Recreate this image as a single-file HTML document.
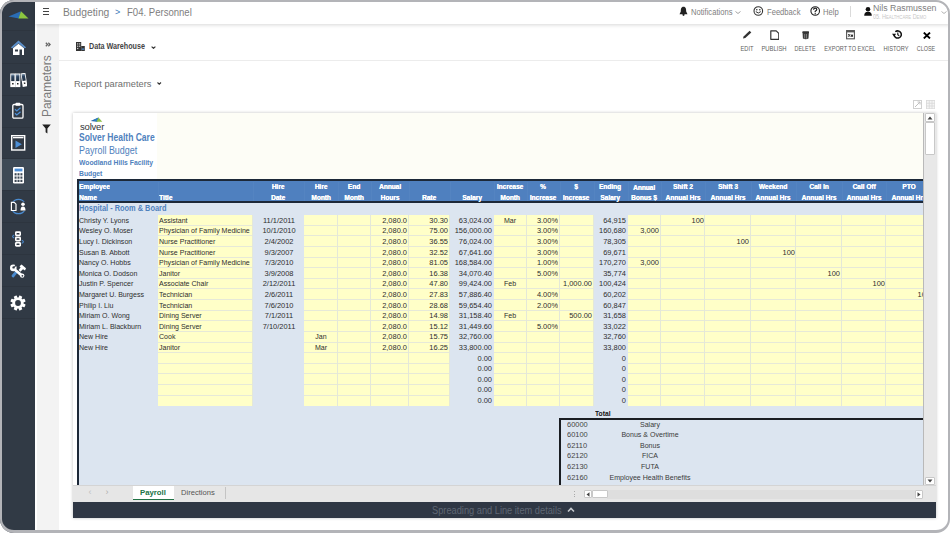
<!DOCTYPE html><html><head><meta charset="utf-8"><style>
*{margin:0;padding:0;box-sizing:border-box}
html,body{width:950px;height:533px;overflow:hidden;background:#fff;font-family:"Liberation Sans",sans-serif}
.ab{position:absolute}
.t{position:absolute;white-space:nowrap;line-height:1}
</style></head><body>
<div class="ab" style="left:0;top:0;width:950px;height:533px;border-radius:14px;overflow:hidden;background:#fff">
<div class="ab" style="left:0;top:0;width:950px;height:533px">
<div class="ab" style="left:0;top:0;width:35px;height:533px;background:#313a45"></div>
<div class="ab" style="left:0;top:159px;width:35px;height:31px;background:#3e4a56"></div>
<div class="ab" style="left:0;top:30px;width:35px;height:1px;background:#2d353f"></div>
<div class="ab" style="left:0;top:63px;width:35px;height:1px;background:#2d353f"></div>
<div class="ab" style="left:0;top:95px;width:35px;height:1px;background:#2d353f"></div>
<div class="ab" style="left:0;top:127px;width:35px;height:1px;background:#2d353f"></div>
<div class="ab" style="left:0;top:158px;width:35px;height:1px;background:#2d353f"></div>
<div class="ab" style="left:0;top:190px;width:35px;height:1px;background:#2d353f"></div>
<div class="ab" style="left:0;top:222px;width:35px;height:1px;background:#2d353f"></div>
<div class="ab" style="left:0;top:254px;width:35px;height:1px;background:#2d353f"></div>
<div class="ab" style="left:0;top:286px;width:35px;height:1px;background:#2d353f"></div>
<div class="ab" style="left:0;top:318px;width:35px;height:1px;background:#2d353f"></div>
<div class="ab" style="left:35px;top:0;width:2px;height:533px;background:#ffffff"></div>
<div class="ab" style="left:37px;top:0;width:22px;height:533px;background:#f3f3f3"></div>
<div class="ab" style="left:35px;top:0;width:915px;height:24px;background:#fff;box-shadow:0 1px 4px rgba(0,0,0,0.16)"></div>
<svg class="ab" style="left:8px;top:10px" width="22" height="10" viewBox="0 0 22 10" ><polygon points="0.5,6.5 13,1.3 11,8.5" fill="#2a6db5"/><polygon points="13,1.3 20.5,8.5 10.5,8.5" fill="#8cc63f"/></svg>
<svg class="ab" style="left:9.8px;top:40px" width="17" height="16" viewBox="0 0 17 16" ><polygon points="8.5,0.5 0.8,7.5 2.5,8.3 8.5,3.2 14.5,8.3 16.2,7.5" fill="#5b8fc9"/><path d="M3 8.2 L8.5 3.8 L14 8.2 V15 H3 Z" fill="#fff"/><rect x="5" y="9.5" width="3" height="2" fill="#313a45"/><rect x="9.5" y="9.5" width="2.5" height="5.5" fill="#313a45"/></svg>
<svg class="ab" style="left:10.3px;top:72.6px" width="17" height="15" viewBox="0 0 17 15" ><defs><linearGradient id="bk" x1="0" y1="0" x2="0" y2="1"><stop offset="0" stop-color="#8da3b8"/><stop offset="0.35" stop-color="#2c4460"/><stop offset="1" stop-color="#1e2e40"/></linearGradient></defs><rect x="0.3" y="0.5" width="10" height="13.6" fill="#fff"/><rect x="1.2" y="1.3" width="3.3" height="6.8" fill="url(#bk)"/><rect x="6.1" y="1.3" width="3.3" height="6.8" fill="url(#bk)"/><rect x="5" y="0.5" width="0.7" height="13.6" fill="#c9ced4"/><rect x="2.1" y="10" width="1.5" height="1.5" fill="#222"/><rect x="7" y="10" width="1.5" height="1.5" fill="#222"/><g transform="rotate(-9 10.6 0.5)"><rect x="10.6" y="0.5" width="4.8" height="13.6" fill="#fff"/><rect x="11.4" y="1.3" width="3.2" height="6.8" fill="url(#bk)"/><rect x="12.3" y="10" width="1.5" height="1.5" fill="#222"/></g></svg>
<svg class="ab" style="left:12px;top:102px" width="12" height="17" viewBox="0 0 12 17" ><rect x="0.8" y="2.5" width="10.2" height="13.6" rx="1.2" fill="none" stroke="#fff" stroke-width="1.3"/><rect x="3.5" y="0.8" width="4.8" height="3" rx="0.8" fill="#fff"/><polyline points="3,7.3 4.8,8.9 8.5,5.8" fill="none" stroke="#4d8fd6" stroke-width="1.3"/><polyline points="3,11.3 4.8,12.9 8.5,9.8" fill="none" stroke="#4d8fd6" stroke-width="1.3"/></svg>
<svg class="ab" style="left:11px;top:135px" width="15" height="16" viewBox="0 0 15 16" ><rect x="0.7" y="0.7" width="13" height="14.3" fill="none" stroke="#fff" stroke-width="1.4"/><rect x="2" y="2" width="10.5" height="1.3" fill="#fff"/><polygon points="4.5,5.5 10.8,9.2 4.5,13" fill="#4d8fd6"/></svg>
<svg class="ab" style="left:13px;top:167px" width="11" height="16.5" viewBox="0 0 11 16.5" ><rect x="0" y="0" width="11" height="16.5" rx="1.2" fill="#fff"/><rect x="1.6" y="1.6" width="7.8" height="2.8" fill="#4d8fd6"/><rect x="1.6" y="6.2" width="2" height="2.2" fill="#3e4a56"/><rect x="4.5" y="6.2" width="2" height="2.2" fill="#3e4a56"/><rect x="7.4" y="6.2" width="2" height="2.2" fill="#3e4a56"/><rect x="1.6" y="9.5" width="2" height="2.2" fill="#3e4a56"/><rect x="4.5" y="9.5" width="2" height="2.2" fill="#3e4a56"/><rect x="7.4" y="9.5" width="2" height="2.2" fill="#3e4a56"/><rect x="1.6" y="12.8" width="2" height="2.2" fill="#3e4a56"/><rect x="4.5" y="12.8" width="2" height="2.2" fill="#3e4a56"/><rect x="7.4" y="12.8" width="2" height="2.2" fill="#3e4a56"/></svg>
<svg class="ab" style="left:9px;top:198px" width="19" height="17" viewBox="0 0 19 17" ><path d="M3.26 4.9 A7.2 7.2 0 0 1 15.74 4.9" fill="none" stroke="#4a8bd0" stroke-width="1.2"/><path d="M15.74 12.1 A7.2 7.2 0 0 1 3.26 12.1" fill="none" stroke="#4a8bd0" stroke-width="1.2"/><rect x="1.6" y="3.8" width="6.2" height="9.3" fill="#313a45"/><rect x="10.8" y="3.8" width="6.6" height="9.3" fill="#313a45"/><path d="M2.4 4.4 H5.2 L7 6.2 V12.5 H2.4 Z" fill="none" stroke="#fff" stroke-width="1.2"/><circle cx="14" cy="6.3" r="1.8" fill="#fff"/><path d="M11.5 12.5 Q11.5 8.6 14 8.6 Q16.5 8.6 16.5 12.5 Z" fill="#fff"/></svg>
<svg class="ab" style="left:10px;top:231px" width="16" height="16" viewBox="0 0 16 16" ><rect x="5" y="0.3" width="6" height="4.8" rx="1.4" fill="#fff"/><rect x="6.5" y="1.9" width="3" height="1.6" rx="0.6" fill="#313a45"/><rect x="5" y="5.6" width="6" height="4.8" rx="1.4" fill="#fff"/><rect x="6.5" y="7.199999999999999" width="3" height="1.6" rx="0.6" fill="#313a45"/><rect x="5" y="10.9" width="6" height="4.8" rx="1.4" fill="#fff"/><rect x="6.5" y="12.5" width="3" height="1.6" rx="0.6" fill="#313a45"/><path d="M4.2 4 Q1 5.5 4.2 7" fill="none" stroke="#4a8bd0" stroke-width="1.1"/><path d="M11.8 9.2 Q15 10.7 11.8 12.2" fill="none" stroke="#4a8bd0" stroke-width="1.1"/></svg>
<svg class="ab" style="left:9px;top:263px" width="18" height="16" viewBox="0 0 18 16" ><path d="M7.2 9.2 L4 13" stroke="#4a8bd0" stroke-width="2.8" stroke-linecap="round"/><path d="M10.5 3.2 L12.6 1.6 L17 5.2 L16 7.4 L14 6.2 L11.4 8.8 L9.6 7 L11.6 4.6 Z" fill="#fff"/><path d="M5 6 L13 12.6" stroke="#fff" stroke-width="2.7" stroke-linecap="round"/><circle cx="4.3" cy="4.9" r="3.3" fill="#fff"/><path d="M4.6 4.4 L7.2 0.4 L9 2.6 Z" fill="#313a45"/><circle cx="4.6" cy="4.4" r="1.2" fill="#313a45"/><circle cx="13.2" cy="12.6" r="2.2" fill="#fff"/><circle cx="13.4" cy="12.8" r="0.9" fill="#313a45"/></svg>
<svg class="ab" style="left:10px;top:295px" width="16" height="16" viewBox="0 0 16 16" ><g transform="translate(8 8)"><rect x="-1.6" y="-7.6" width="3.2" height="3.6" rx="0.5" fill="#fff" transform="rotate(22.5)"/><rect x="-1.6" y="-7.6" width="3.2" height="3.6" rx="0.5" fill="#fff" transform="rotate(67.5)"/><rect x="-1.6" y="-7.6" width="3.2" height="3.6" rx="0.5" fill="#fff" transform="rotate(112.5)"/><rect x="-1.6" y="-7.6" width="3.2" height="3.6" rx="0.5" fill="#fff" transform="rotate(157.5)"/><rect x="-1.6" y="-7.6" width="3.2" height="3.6" rx="0.5" fill="#fff" transform="rotate(202.5)"/><rect x="-1.6" y="-7.6" width="3.2" height="3.6" rx="0.5" fill="#fff" transform="rotate(247.5)"/><rect x="-1.6" y="-7.6" width="3.2" height="3.6" rx="0.5" fill="#fff" transform="rotate(292.5)"/><rect x="-1.6" y="-7.6" width="3.2" height="3.6" rx="0.5" fill="#fff" transform="rotate(337.5)"/><circle r="5.6" fill="#fff"/><circle r="2.9" fill="#313a45"/></g></svg>
<div class="ab" style="left:43px;top:8.3px;width:6px;height:1.1px;background:#444"></div>
<div class="ab" style="left:43px;top:10.9px;width:6px;height:1.1px;background:#444"></div>
<div class="ab" style="left:43px;top:13.5px;width:6px;height:1.1px;background:#444"></div>
<div class="t" style="left:62.80px;top:7px;font-size:10.5px;color:#7e7e7e;transform:scaleX(0.98);transform-origin:0 0;">Budgeting</div>
<div class="t" style="left:115.40px;top:7px;font-size:9.5px;color:#3a78b8;transform:scaleX(0.95);transform-origin:0 0;">&gt;</div>
<div class="t" style="left:126.80px;top:7px;font-size:10.5px;color:#7e7e7e;transform:scaleX(0.91);transform-origin:0 0;">F04. Personnel</div>
<svg class="ab" style="left:679px;top:6px" width="9" height="10" viewBox="0 0 9 10" ><path d="M4.5 0.8 C7 0.8 7.2 3.5 7.2 5.5 L8.5 8.2 H0.5 L1.8 5.5 C1.8 3.5 2 0.8 4.5 0.8 Z" fill="#222"/><circle cx="4.5" cy="8.8" r="1.1" fill="#222"/></svg>
<div class="t" style="left:691.00px;top:9px;font-size:8.2px;color:#7e7e7e;transform:scaleX(0.93);transform-origin:0 0;">Notifications</div>
<svg class="ab" style="left:735px;top:11px" width="6" height="3" viewBox="0 0 6 3" ><polyline points="0.5,0.5 3,2.5 5.5,0.5" fill="none" stroke="#999" stroke-width="0.9"/></svg>
<svg class="ab" style="left:753px;top:6px" width="11" height="10" viewBox="0 0 11 10" ><circle cx="5.3" cy="5" r="4.3" fill="none" stroke="#333" stroke-width="1.1"/><circle cx="3.8" cy="3.8" r="0.8" fill="#333"/><circle cx="6.8" cy="3.8" r="0.8" fill="#333"/><path d="M2.8 5.6 Q5.3 8.4 7.8 5.6" fill="none" stroke="#333" stroke-width="1"/></svg>
<div class="t" style="left:766.50px;top:9px;font-size:8.2px;color:#7e7e7e;transform:scaleX(0.93);transform-origin:0 0;">Feedback</div>
<svg class="ab" style="left:810px;top:6px" width="11" height="10" viewBox="0 0 11 10" ><circle cx="5.2" cy="5" r="4.3" fill="none" stroke="#222" stroke-width="1.1"/><path d="M3.6 3.8 Q3.6 2.2 5.2 2.2 Q6.8 2.2 6.8 3.6 Q6.8 4.6 5.2 5.3 V6.3" fill="none" stroke="#222" stroke-width="1.2"/><circle cx="5.2" cy="7.8" r="0.7" fill="#222"/></svg>
<div class="t" style="left:823.00px;top:9px;font-size:8.2px;color:#7e7e7e;transform:scaleX(0.93);transform-origin:0 0;">Help</div>
<div class="ab" style="left:850px;top:6.3px;width:0.8px;height:11px;background:#dadada"></div>
<svg class="ab" style="left:864px;top:7px" width="8" height="9" viewBox="0 0 8 9" ><circle cx="4" cy="2.3" r="2.3" fill="#111"/><path d="M0.2 8.8 Q0.2 4.8 4 4.8 Q7.8 4.8 7.8 8.8 Z" fill="#111"/></svg>
<div class="t" style="left:873.00px;top:4px;font-size:9.2px;color:#7e7e7e;transform:scaleX(0.955);transform-origin:0 0;">Nils Rasmussen</div>
<div class="t" style="left:873px;top:14px;font-size:6.8px;color:#c8c8c8;transform:scaleX(0.8);transform-origin:0 0">05. H<span style="font-size:5.3px">EALTHCARE</span> D<span style="font-size:5.3px">EMO</span></div>
<svg class="ab" style="left:940.5px;top:11px" width="6" height="3" viewBox="0 0 6 3" ><polyline points="0.5,0.5 3,2.5 5.5,0.5" fill="none" stroke="#aaa" stroke-width="0.9"/></svg>
<svg class="ab" style="left:45px;top:41.5px" width="6" height="5" viewBox="0 0 6 5" ><polyline points="0.8,0.8 2.6,2.5 0.8,4.2" fill="none" stroke="#666" stroke-width="1.3"/><polyline points="3.3,0.8 5.1,2.5 3.3,4.2" fill="none" stroke="#666" stroke-width="1.3"/></svg>
<div class="t" style="left:40.5px;top:116.6px;font-size:12.5px;color:#7a7a7a;transform:rotate(-90deg) scaleX(0.955);transform-origin:0 0">Parameters</div>
<svg class="ab" style="left:42px;top:124px" width="9" height="10" viewBox="0 0 9 10" ><polygon points="0.2,0.5 8.8,0.5 5.4,4.5 5.4,9.5 3.6,8.3 3.6,4.5" fill="#222"/></svg>
<svg class="ab" style="left:76px;top:42px" width="9" height="9" viewBox="0 0 9 9" ><rect x="0" y="0" width="5.2" height="9" fill="#333"/><rect x="5.2" y="4" width="3.6" height="5" fill="#333"/><rect x="1" y="1.3" width="1.3" height="1.2" fill="#ccc"/><rect x="3" y="1.3" width="1.3" height="1.2" fill="#ccc"/><rect x="1" y="3.6" width="1.3" height="1.2" fill="#ccc"/><rect x="3" y="3.6" width="1.3" height="1.2" fill="#ccc"/><rect x="1" y="5.9" width="1.3" height="1.2" fill="#ccc"/><rect x="5.8" y="6.5" width="2.4" height="1.2" fill="#4d8fd6"/></svg>
<div class="t" style="left:88.90px;top:42px;font-size:8.4px;color:#444;font-weight:bold;transform:scaleX(0.857);transform-origin:0 0;">Data Warehouse</div>
<svg class="ab" style="left:150.5px;top:45.5px" width="5" height="3" viewBox="0 0 5 3" ><polyline points="0.6,0.6 2.5,2.3 4.4,0.6" fill="none" stroke="#333" stroke-width="1.2"/></svg>
<div class="ab" style="left:59px;top:60.2px;width:889px;height:1px;background:#ececec"></div>
<div class="t" style="left:647.30px;width:200px;text-align:center;top:46px;font-size:6.4px;color:#606060;transform:scaleX(0.89);transform-origin:50% 0;">EDIT</div>
<div class="t" style="left:674.30px;width:200px;text-align:center;top:46px;font-size:6.4px;color:#606060;transform:scaleX(0.92);transform-origin:50% 0;">PUBLISH</div>
<div class="t" style="left:705.00px;width:200px;text-align:center;top:46px;font-size:6.4px;color:#606060;transform:scaleX(0.843);transform-origin:50% 0;">DELETE</div>
<div class="t" style="left:749.65px;width:200px;text-align:center;top:46px;font-size:6.4px;color:#606060;transform:scaleX(0.867);transform-origin:50% 0;">EXPORT TO EXCEL</div>
<div class="t" style="left:796.30px;width:200px;text-align:center;top:46px;font-size:6.4px;color:#606060;transform:scaleX(0.887);transform-origin:50% 0;">HISTORY</div>
<div class="t" style="left:825.90px;width:200px;text-align:center;top:46px;font-size:6.4px;color:#606060;transform:scaleX(0.848);transform-origin:50% 0;">CLOSE</div>
<svg class="ab" style="left:742px;top:30px" width="10" height="9" viewBox="0 0 10 9" ><path d="M1 8.5 L1.6 6.5 L7.6 0.8 L9.3 2.5 L3.3 8 Z" fill="#333"/></svg>
<svg class="ab" style="left:769.5px;top:29.8px" width="9.5" height="10" viewBox="0 0 9.5 10" ><path d="M0.8 0.8 H6.2 L8.8 3.4 V9.3 H0.8 Z" fill="none" stroke="#333" stroke-width="1.2" stroke-linejoin="round"/></svg>
<svg class="ab" style="left:801.8px;top:31px" width="7.5" height="9" viewBox="0 0 7.5 9" ><rect x="0.2" y="0.3" width="7" height="2" rx="1" fill="#333"/><path d="M0.6 2 H6.8 L6.5 7.6 Q3.7 9 0.9 7.6 Z" fill="#3a3a3a"/><rect x="2.4" y="3" width="0.7" height="4.6" fill="#9a9a9a"/><rect x="4.2" y="3" width="0.7" height="4.6" fill="#9a9a9a"/></svg>
<svg class="ab" style="left:845.5px;top:30px" width="9" height="9.5" viewBox="0 0 9 9.5" ><rect x="0.6" y="0.6" width="7.8" height="8.2" fill="none" stroke="#555" stroke-width="1.1"/><rect x="0.6" y="0.6" width="7.8" height="1.8" fill="#555"/><path d="M2.2 4 L4.2 6.8 M4.2 4 L2.2 6.8" stroke="#333" stroke-width="0.9"/><rect x="4.8" y="4.6" width="2.2" height="2.2" fill="#333"/></svg>
<svg class="ab" style="left:891.8px;top:29.9px" width="10" height="9" viewBox="0 0 10 9" ><path d="M2.1 4.5 A3.6 3.6 0 1 0 3.3 1.8" fill="none" stroke="#111" stroke-width="1.5"/><polygon points="0,3.8 4.2,3.8 2.1,6.4" fill="#111"/><path d="M5.8 2.6 V4.8 L7.2 5.8" fill="none" stroke="#111" stroke-width="1.1"/></svg>
<svg class="ab" style="left:922.5px;top:31.8px" width="8" height="7" viewBox="0 0 8 7" ><path d="M0.8 0.6 L7 6.4 M7 0.6 L0.8 6.4" stroke="#000" stroke-width="1.9"/></svg>
<div class="t" style="left:74.00px;top:79px;font-size:9.4px;color:#6e6e6e;transform:scaleX(0.99);transform-origin:0 0;">Report parameters</div>
<svg class="ab" style="left:157px;top:82.3px" width="4.5" height="2.8" viewBox="0 0 4.5 2.8" ><polyline points="0.5,0.5 2.25,2.2 4,0.5" fill="none" stroke="#333" stroke-width="1.1"/></svg>
<svg class="ab" style="left:913px;top:100px" width="9" height="9" viewBox="0 0 9 9" ><rect x="0.5" y="0.5" width="8" height="8" fill="none" stroke="#d0d0d0" stroke-width="1"/><path d="M2 7 L7 2 M4.5 2 H7 V4.5" fill="none" stroke="#c0c0c0" stroke-width="1"/></svg>
<svg class="ab" style="left:926px;top:100px" width="9" height="9" viewBox="0 0 9 9" ><rect x="0" y="0" width="9" height="9" fill="#d8d8d8"/><rect x="0.8" y="0.8" width="2" height="2" fill="#f4f4f4"/><rect x="3.5999999999999996" y="0.8" width="2" height="2" fill="#f4f4f4"/><rect x="6.3999999999999995" y="0.8" width="2" height="2" fill="#f4f4f4"/><rect x="0.8" y="3.5999999999999996" width="2" height="2" fill="#f4f4f4"/><rect x="3.5999999999999996" y="3.5999999999999996" width="2" height="2" fill="#f4f4f4"/><rect x="6.3999999999999995" y="3.5999999999999996" width="2" height="2" fill="#f4f4f4"/><rect x="0.8" y="6.3999999999999995" width="2" height="2" fill="#f4f4f4"/><rect x="3.5999999999999996" y="6.3999999999999995" width="2" height="2" fill="#f4f4f4"/><rect x="6.3999999999999995" y="6.3999999999999995" width="2" height="2" fill="#f4f4f4"/></svg>
<div class="ab" style="left:73px;top:113px;width:863px;height:405px;background:#fff;box-shadow:0 0 3px rgba(0,0,0,0.25)"></div>
<div class="ab" style="left:157px;top:113px;width:766px;height:66px;background:#fdfdf6"></div>
<div class="ab" style="left:0;top:0;width:923px;height:485px;overflow:hidden">
<svg class="ab" style="left:90px;top:117px" width="13" height="6" viewBox="0 0 13 6" ><polygon points="0.6,4.1 8.5,0.4 7.3,4.8" fill="#1f5f9e"/><polygon points="3,3.2 8.5,0.4 7.3,4.8" fill="#2f7fc4"/><polygon points="8.5,0.4 12.3,4.8 6.4,4.8" fill="#8cc04a"/></svg>
<div class="t" style="left:80px;top:122px;font-size:9.5px;color:#333;transform:scaleX(1.0);transform-origin:0 0;letter-spacing:-0.2px">solver</div>
<div class="t" style="left:79.00px;top:133px;font-size:10.2px;color:#4f81bd;font-weight:bold;transform:scaleX(0.835);transform-origin:0 0;">Solver Health Care</div>
<div class="t" style="left:79.00px;top:146px;font-size:10.2px;color:#4f81bd;transform:scaleX(0.88);transform-origin:0 0;">Payroll Budget</div>
<div class="t" style="left:79.00px;top:159px;font-size:7.8px;color:#4f81bd;font-weight:bold;transform:scaleX(0.87);transform-origin:0 0;">Woodland Hills Facility</div>
<div class="t" style="left:79.00px;top:170px;font-size:7.8px;color:#4f81bd;font-weight:bold;transform:scaleX(0.87);transform-origin:0 0;">Budget</div>
<div class="ab" style="left:77px;top:202px;width:846px;height:283px;background:#dce5f0"></div>
<div class="ab" style="left:77px;top:179px;width:846px;height:24px;background:#4f80bf;border-top:2px solid #1c2838;border-bottom:2px solid #1c2838"></div>
<div class="ab" style="left:158.0px;top:181.5px;width:1px;height:19.5px;background:#5484c1"></div>
<div class="ab" style="left:253.0px;top:181.5px;width:1px;height:19.5px;background:#5484c1"></div>
<div class="ab" style="left:304.0px;top:181.5px;width:1px;height:19.5px;background:#5484c1"></div>
<div class="ab" style="left:337.5px;top:181.5px;width:1px;height:19.5px;background:#5484c1"></div>
<div class="ab" style="left:370.5px;top:181.5px;width:1px;height:19.5px;background:#5484c1"></div>
<div class="ab" style="left:408.5px;top:181.5px;width:1px;height:19.5px;background:#5484c1"></div>
<div class="ab" style="left:449.5px;top:181.5px;width:1px;height:19.5px;background:#5484c1"></div>
<div class="ab" style="left:493.5px;top:181.5px;width:1px;height:19.5px;background:#5484c1"></div>
<div class="ab" style="left:526.5px;top:181.5px;width:1px;height:19.5px;background:#5484c1"></div>
<div class="ab" style="left:559.5px;top:181.5px;width:1px;height:19.5px;background:#5484c1"></div>
<div class="ab" style="left:593.5px;top:181.5px;width:1px;height:19.5px;background:#5484c1"></div>
<div class="ab" style="left:627.5px;top:181.5px;width:1px;height:19.5px;background:#5484c1"></div>
<div class="ab" style="left:660.5px;top:181.5px;width:1px;height:19.5px;background:#5484c1"></div>
<div class="ab" style="left:705.0px;top:181.5px;width:1px;height:19.5px;background:#5484c1"></div>
<div class="ab" style="left:750.5px;top:181.5px;width:1px;height:19.5px;background:#5484c1"></div>
<div class="ab" style="left:796.0px;top:181.5px;width:1px;height:19.5px;background:#5484c1"></div>
<div class="ab" style="left:841.5px;top:181.5px;width:1px;height:19.5px;background:#5484c1"></div>
<div class="ab" style="left:886.0px;top:181.5px;width:1px;height:19.5px;background:#5484c1"></div>
<div class="ab" style="left:77px;top:179.5px;width:1.5px;height:306px;background:#1c2838"></div>
<div class="ab" style="left:158.0px;top:214.7px;width:95.0px;height:191.0px;background:#ffffc8"></div>
<div class="ab" style="left:304.0px;top:214.7px;width:33.5px;height:191.0px;background:#ffffc8"></div>
<div class="ab" style="left:337.5px;top:214.7px;width:33.0px;height:191.0px;background:#ffffc8"></div>
<div class="ab" style="left:370.5px;top:214.7px;width:38.0px;height:191.0px;background:#ffffc8"></div>
<div class="ab" style="left:408.5px;top:214.7px;width:41.0px;height:191.0px;background:#ffffc8"></div>
<div class="ab" style="left:493.5px;top:214.7px;width:33.0px;height:191.0px;background:#ffffc8"></div>
<div class="ab" style="left:526.5px;top:214.7px;width:33.0px;height:191.0px;background:#ffffc8"></div>
<div class="ab" style="left:559.5px;top:214.7px;width:34.0px;height:191.0px;background:#ffffc8"></div>
<div class="ab" style="left:627.5px;top:214.7px;width:33.0px;height:191.0px;background:#ffffc8"></div>
<div class="ab" style="left:660.5px;top:214.7px;width:44.5px;height:191.0px;background:#ffffc8"></div>
<div class="ab" style="left:705.0px;top:214.7px;width:45.5px;height:191.0px;background:#ffffc8"></div>
<div class="ab" style="left:750.5px;top:214.7px;width:45.5px;height:191.0px;background:#ffffc8"></div>
<div class="ab" style="left:796.0px;top:214.7px;width:45.5px;height:191.0px;background:#ffffc8"></div>
<div class="ab" style="left:841.5px;top:214.7px;width:44.5px;height:191.0px;background:#ffffc8"></div>
<div class="ab" style="left:886.0px;top:214.7px;width:45.5px;height:191.0px;background:#ffffc8"></div>
<div class="ab" style="left:158.0px;top:224.81px;width:95.0px;height:1px;background:#e6e9d8"></div>
<div class="ab" style="left:158.0px;top:235.42px;width:95.0px;height:1px;background:#e6e9d8"></div>
<div class="ab" style="left:158.0px;top:246.03px;width:95.0px;height:1px;background:#e6e9d8"></div>
<div class="ab" style="left:158.0px;top:256.64px;width:95.0px;height:1px;background:#e6e9d8"></div>
<div class="ab" style="left:158.0px;top:267.25px;width:95.0px;height:1px;background:#e6e9d8"></div>
<div class="ab" style="left:158.0px;top:277.86px;width:95.0px;height:1px;background:#e6e9d8"></div>
<div class="ab" style="left:158.0px;top:288.47px;width:95.0px;height:1px;background:#e6e9d8"></div>
<div class="ab" style="left:158.0px;top:299.08px;width:95.0px;height:1px;background:#e6e9d8"></div>
<div class="ab" style="left:158.0px;top:309.69px;width:95.0px;height:1px;background:#e6e9d8"></div>
<div class="ab" style="left:158.0px;top:320.30px;width:95.0px;height:1px;background:#e6e9d8"></div>
<div class="ab" style="left:158.0px;top:330.91px;width:95.0px;height:1px;background:#e6e9d8"></div>
<div class="ab" style="left:158.0px;top:341.52px;width:95.0px;height:1px;background:#e6e9d8"></div>
<div class="ab" style="left:158.0px;top:352.13px;width:95.0px;height:1px;background:#e6e9d8"></div>
<div class="ab" style="left:158.0px;top:362.74px;width:95.0px;height:1px;background:#e6e9d8"></div>
<div class="ab" style="left:158.0px;top:373.35px;width:95.0px;height:1px;background:#e6e9d8"></div>
<div class="ab" style="left:158.0px;top:383.96px;width:95.0px;height:1px;background:#e6e9d8"></div>
<div class="ab" style="left:158.0px;top:394.57px;width:95.0px;height:1px;background:#e6e9d8"></div>
<div class="ab" style="left:252.4px;top:214.7px;width:1px;height:191.0px;background:#e4e8d8"></div>
<div class="ab" style="left:304.0px;top:224.81px;width:33.5px;height:1px;background:#e6e9d8"></div>
<div class="ab" style="left:304.0px;top:235.42px;width:33.5px;height:1px;background:#e6e9d8"></div>
<div class="ab" style="left:304.0px;top:246.03px;width:33.5px;height:1px;background:#e6e9d8"></div>
<div class="ab" style="left:304.0px;top:256.64px;width:33.5px;height:1px;background:#e6e9d8"></div>
<div class="ab" style="left:304.0px;top:267.25px;width:33.5px;height:1px;background:#e6e9d8"></div>
<div class="ab" style="left:304.0px;top:277.86px;width:33.5px;height:1px;background:#e6e9d8"></div>
<div class="ab" style="left:304.0px;top:288.47px;width:33.5px;height:1px;background:#e6e9d8"></div>
<div class="ab" style="left:304.0px;top:299.08px;width:33.5px;height:1px;background:#e6e9d8"></div>
<div class="ab" style="left:304.0px;top:309.69px;width:33.5px;height:1px;background:#e6e9d8"></div>
<div class="ab" style="left:304.0px;top:320.30px;width:33.5px;height:1px;background:#e6e9d8"></div>
<div class="ab" style="left:304.0px;top:330.91px;width:33.5px;height:1px;background:#e6e9d8"></div>
<div class="ab" style="left:304.0px;top:341.52px;width:33.5px;height:1px;background:#e6e9d8"></div>
<div class="ab" style="left:304.0px;top:352.13px;width:33.5px;height:1px;background:#e6e9d8"></div>
<div class="ab" style="left:304.0px;top:362.74px;width:33.5px;height:1px;background:#e6e9d8"></div>
<div class="ab" style="left:304.0px;top:373.35px;width:33.5px;height:1px;background:#e6e9d8"></div>
<div class="ab" style="left:304.0px;top:383.96px;width:33.5px;height:1px;background:#e6e9d8"></div>
<div class="ab" style="left:304.0px;top:394.57px;width:33.5px;height:1px;background:#e6e9d8"></div>
<div class="ab" style="left:336.9px;top:214.7px;width:1px;height:191.0px;background:#e4e8d8"></div>
<div class="ab" style="left:337.5px;top:224.81px;width:33.0px;height:1px;background:#e6e9d8"></div>
<div class="ab" style="left:337.5px;top:235.42px;width:33.0px;height:1px;background:#e6e9d8"></div>
<div class="ab" style="left:337.5px;top:246.03px;width:33.0px;height:1px;background:#e6e9d8"></div>
<div class="ab" style="left:337.5px;top:256.64px;width:33.0px;height:1px;background:#e6e9d8"></div>
<div class="ab" style="left:337.5px;top:267.25px;width:33.0px;height:1px;background:#e6e9d8"></div>
<div class="ab" style="left:337.5px;top:277.86px;width:33.0px;height:1px;background:#e6e9d8"></div>
<div class="ab" style="left:337.5px;top:288.47px;width:33.0px;height:1px;background:#e6e9d8"></div>
<div class="ab" style="left:337.5px;top:299.08px;width:33.0px;height:1px;background:#e6e9d8"></div>
<div class="ab" style="left:337.5px;top:309.69px;width:33.0px;height:1px;background:#e6e9d8"></div>
<div class="ab" style="left:337.5px;top:320.30px;width:33.0px;height:1px;background:#e6e9d8"></div>
<div class="ab" style="left:337.5px;top:330.91px;width:33.0px;height:1px;background:#e6e9d8"></div>
<div class="ab" style="left:337.5px;top:341.52px;width:33.0px;height:1px;background:#e6e9d8"></div>
<div class="ab" style="left:337.5px;top:352.13px;width:33.0px;height:1px;background:#e6e9d8"></div>
<div class="ab" style="left:337.5px;top:362.74px;width:33.0px;height:1px;background:#e6e9d8"></div>
<div class="ab" style="left:337.5px;top:373.35px;width:33.0px;height:1px;background:#e6e9d8"></div>
<div class="ab" style="left:337.5px;top:383.96px;width:33.0px;height:1px;background:#e6e9d8"></div>
<div class="ab" style="left:337.5px;top:394.57px;width:33.0px;height:1px;background:#e6e9d8"></div>
<div class="ab" style="left:369.9px;top:214.7px;width:1px;height:191.0px;background:#e4e8d8"></div>
<div class="ab" style="left:370.5px;top:224.81px;width:38.0px;height:1px;background:#e6e9d8"></div>
<div class="ab" style="left:370.5px;top:235.42px;width:38.0px;height:1px;background:#e6e9d8"></div>
<div class="ab" style="left:370.5px;top:246.03px;width:38.0px;height:1px;background:#e6e9d8"></div>
<div class="ab" style="left:370.5px;top:256.64px;width:38.0px;height:1px;background:#e6e9d8"></div>
<div class="ab" style="left:370.5px;top:267.25px;width:38.0px;height:1px;background:#e6e9d8"></div>
<div class="ab" style="left:370.5px;top:277.86px;width:38.0px;height:1px;background:#e6e9d8"></div>
<div class="ab" style="left:370.5px;top:288.47px;width:38.0px;height:1px;background:#e6e9d8"></div>
<div class="ab" style="left:370.5px;top:299.08px;width:38.0px;height:1px;background:#e6e9d8"></div>
<div class="ab" style="left:370.5px;top:309.69px;width:38.0px;height:1px;background:#e6e9d8"></div>
<div class="ab" style="left:370.5px;top:320.30px;width:38.0px;height:1px;background:#e6e9d8"></div>
<div class="ab" style="left:370.5px;top:330.91px;width:38.0px;height:1px;background:#e6e9d8"></div>
<div class="ab" style="left:370.5px;top:341.52px;width:38.0px;height:1px;background:#e6e9d8"></div>
<div class="ab" style="left:370.5px;top:352.13px;width:38.0px;height:1px;background:#e6e9d8"></div>
<div class="ab" style="left:370.5px;top:362.74px;width:38.0px;height:1px;background:#e6e9d8"></div>
<div class="ab" style="left:370.5px;top:373.35px;width:38.0px;height:1px;background:#e6e9d8"></div>
<div class="ab" style="left:370.5px;top:383.96px;width:38.0px;height:1px;background:#e6e9d8"></div>
<div class="ab" style="left:370.5px;top:394.57px;width:38.0px;height:1px;background:#e6e9d8"></div>
<div class="ab" style="left:407.9px;top:214.7px;width:1px;height:191.0px;background:#e4e8d8"></div>
<div class="ab" style="left:408.5px;top:224.81px;width:41.0px;height:1px;background:#e6e9d8"></div>
<div class="ab" style="left:408.5px;top:235.42px;width:41.0px;height:1px;background:#e6e9d8"></div>
<div class="ab" style="left:408.5px;top:246.03px;width:41.0px;height:1px;background:#e6e9d8"></div>
<div class="ab" style="left:408.5px;top:256.64px;width:41.0px;height:1px;background:#e6e9d8"></div>
<div class="ab" style="left:408.5px;top:267.25px;width:41.0px;height:1px;background:#e6e9d8"></div>
<div class="ab" style="left:408.5px;top:277.86px;width:41.0px;height:1px;background:#e6e9d8"></div>
<div class="ab" style="left:408.5px;top:288.47px;width:41.0px;height:1px;background:#e6e9d8"></div>
<div class="ab" style="left:408.5px;top:299.08px;width:41.0px;height:1px;background:#e6e9d8"></div>
<div class="ab" style="left:408.5px;top:309.69px;width:41.0px;height:1px;background:#e6e9d8"></div>
<div class="ab" style="left:408.5px;top:320.30px;width:41.0px;height:1px;background:#e6e9d8"></div>
<div class="ab" style="left:408.5px;top:330.91px;width:41.0px;height:1px;background:#e6e9d8"></div>
<div class="ab" style="left:408.5px;top:341.52px;width:41.0px;height:1px;background:#e6e9d8"></div>
<div class="ab" style="left:408.5px;top:352.13px;width:41.0px;height:1px;background:#e6e9d8"></div>
<div class="ab" style="left:408.5px;top:362.74px;width:41.0px;height:1px;background:#e6e9d8"></div>
<div class="ab" style="left:408.5px;top:373.35px;width:41.0px;height:1px;background:#e6e9d8"></div>
<div class="ab" style="left:408.5px;top:383.96px;width:41.0px;height:1px;background:#e6e9d8"></div>
<div class="ab" style="left:408.5px;top:394.57px;width:41.0px;height:1px;background:#e6e9d8"></div>
<div class="ab" style="left:448.9px;top:214.7px;width:1px;height:191.0px;background:#e4e8d8"></div>
<div class="ab" style="left:493.5px;top:224.81px;width:33.0px;height:1px;background:#e6e9d8"></div>
<div class="ab" style="left:493.5px;top:235.42px;width:33.0px;height:1px;background:#e6e9d8"></div>
<div class="ab" style="left:493.5px;top:246.03px;width:33.0px;height:1px;background:#e6e9d8"></div>
<div class="ab" style="left:493.5px;top:256.64px;width:33.0px;height:1px;background:#e6e9d8"></div>
<div class="ab" style="left:493.5px;top:267.25px;width:33.0px;height:1px;background:#e6e9d8"></div>
<div class="ab" style="left:493.5px;top:277.86px;width:33.0px;height:1px;background:#e6e9d8"></div>
<div class="ab" style="left:493.5px;top:288.47px;width:33.0px;height:1px;background:#e6e9d8"></div>
<div class="ab" style="left:493.5px;top:299.08px;width:33.0px;height:1px;background:#e6e9d8"></div>
<div class="ab" style="left:493.5px;top:309.69px;width:33.0px;height:1px;background:#e6e9d8"></div>
<div class="ab" style="left:493.5px;top:320.30px;width:33.0px;height:1px;background:#e6e9d8"></div>
<div class="ab" style="left:493.5px;top:330.91px;width:33.0px;height:1px;background:#e6e9d8"></div>
<div class="ab" style="left:493.5px;top:341.52px;width:33.0px;height:1px;background:#e6e9d8"></div>
<div class="ab" style="left:493.5px;top:352.13px;width:33.0px;height:1px;background:#e6e9d8"></div>
<div class="ab" style="left:493.5px;top:362.74px;width:33.0px;height:1px;background:#e6e9d8"></div>
<div class="ab" style="left:493.5px;top:373.35px;width:33.0px;height:1px;background:#e6e9d8"></div>
<div class="ab" style="left:493.5px;top:383.96px;width:33.0px;height:1px;background:#e6e9d8"></div>
<div class="ab" style="left:493.5px;top:394.57px;width:33.0px;height:1px;background:#e6e9d8"></div>
<div class="ab" style="left:525.9px;top:214.7px;width:1px;height:191.0px;background:#e4e8d8"></div>
<div class="ab" style="left:526.5px;top:224.81px;width:33.0px;height:1px;background:#e6e9d8"></div>
<div class="ab" style="left:526.5px;top:235.42px;width:33.0px;height:1px;background:#e6e9d8"></div>
<div class="ab" style="left:526.5px;top:246.03px;width:33.0px;height:1px;background:#e6e9d8"></div>
<div class="ab" style="left:526.5px;top:256.64px;width:33.0px;height:1px;background:#e6e9d8"></div>
<div class="ab" style="left:526.5px;top:267.25px;width:33.0px;height:1px;background:#e6e9d8"></div>
<div class="ab" style="left:526.5px;top:277.86px;width:33.0px;height:1px;background:#e6e9d8"></div>
<div class="ab" style="left:526.5px;top:288.47px;width:33.0px;height:1px;background:#e6e9d8"></div>
<div class="ab" style="left:526.5px;top:299.08px;width:33.0px;height:1px;background:#e6e9d8"></div>
<div class="ab" style="left:526.5px;top:309.69px;width:33.0px;height:1px;background:#e6e9d8"></div>
<div class="ab" style="left:526.5px;top:320.30px;width:33.0px;height:1px;background:#e6e9d8"></div>
<div class="ab" style="left:526.5px;top:330.91px;width:33.0px;height:1px;background:#e6e9d8"></div>
<div class="ab" style="left:526.5px;top:341.52px;width:33.0px;height:1px;background:#e6e9d8"></div>
<div class="ab" style="left:526.5px;top:352.13px;width:33.0px;height:1px;background:#e6e9d8"></div>
<div class="ab" style="left:526.5px;top:362.74px;width:33.0px;height:1px;background:#e6e9d8"></div>
<div class="ab" style="left:526.5px;top:373.35px;width:33.0px;height:1px;background:#e6e9d8"></div>
<div class="ab" style="left:526.5px;top:383.96px;width:33.0px;height:1px;background:#e6e9d8"></div>
<div class="ab" style="left:526.5px;top:394.57px;width:33.0px;height:1px;background:#e6e9d8"></div>
<div class="ab" style="left:558.9px;top:214.7px;width:1px;height:191.0px;background:#e4e8d8"></div>
<div class="ab" style="left:559.5px;top:224.81px;width:34.0px;height:1px;background:#e6e9d8"></div>
<div class="ab" style="left:559.5px;top:235.42px;width:34.0px;height:1px;background:#e6e9d8"></div>
<div class="ab" style="left:559.5px;top:246.03px;width:34.0px;height:1px;background:#e6e9d8"></div>
<div class="ab" style="left:559.5px;top:256.64px;width:34.0px;height:1px;background:#e6e9d8"></div>
<div class="ab" style="left:559.5px;top:267.25px;width:34.0px;height:1px;background:#e6e9d8"></div>
<div class="ab" style="left:559.5px;top:277.86px;width:34.0px;height:1px;background:#e6e9d8"></div>
<div class="ab" style="left:559.5px;top:288.47px;width:34.0px;height:1px;background:#e6e9d8"></div>
<div class="ab" style="left:559.5px;top:299.08px;width:34.0px;height:1px;background:#e6e9d8"></div>
<div class="ab" style="left:559.5px;top:309.69px;width:34.0px;height:1px;background:#e6e9d8"></div>
<div class="ab" style="left:559.5px;top:320.30px;width:34.0px;height:1px;background:#e6e9d8"></div>
<div class="ab" style="left:559.5px;top:330.91px;width:34.0px;height:1px;background:#e6e9d8"></div>
<div class="ab" style="left:559.5px;top:341.52px;width:34.0px;height:1px;background:#e6e9d8"></div>
<div class="ab" style="left:559.5px;top:352.13px;width:34.0px;height:1px;background:#e6e9d8"></div>
<div class="ab" style="left:559.5px;top:362.74px;width:34.0px;height:1px;background:#e6e9d8"></div>
<div class="ab" style="left:559.5px;top:373.35px;width:34.0px;height:1px;background:#e6e9d8"></div>
<div class="ab" style="left:559.5px;top:383.96px;width:34.0px;height:1px;background:#e6e9d8"></div>
<div class="ab" style="left:559.5px;top:394.57px;width:34.0px;height:1px;background:#e6e9d8"></div>
<div class="ab" style="left:592.9px;top:214.7px;width:1px;height:191.0px;background:#e4e8d8"></div>
<div class="ab" style="left:627.5px;top:224.81px;width:33.0px;height:1px;background:#e6e9d8"></div>
<div class="ab" style="left:627.5px;top:235.42px;width:33.0px;height:1px;background:#e6e9d8"></div>
<div class="ab" style="left:627.5px;top:246.03px;width:33.0px;height:1px;background:#e6e9d8"></div>
<div class="ab" style="left:627.5px;top:256.64px;width:33.0px;height:1px;background:#e6e9d8"></div>
<div class="ab" style="left:627.5px;top:267.25px;width:33.0px;height:1px;background:#e6e9d8"></div>
<div class="ab" style="left:627.5px;top:277.86px;width:33.0px;height:1px;background:#e6e9d8"></div>
<div class="ab" style="left:627.5px;top:288.47px;width:33.0px;height:1px;background:#e6e9d8"></div>
<div class="ab" style="left:627.5px;top:299.08px;width:33.0px;height:1px;background:#e6e9d8"></div>
<div class="ab" style="left:627.5px;top:309.69px;width:33.0px;height:1px;background:#e6e9d8"></div>
<div class="ab" style="left:627.5px;top:320.30px;width:33.0px;height:1px;background:#e6e9d8"></div>
<div class="ab" style="left:627.5px;top:330.91px;width:33.0px;height:1px;background:#e6e9d8"></div>
<div class="ab" style="left:627.5px;top:341.52px;width:33.0px;height:1px;background:#e6e9d8"></div>
<div class="ab" style="left:627.5px;top:352.13px;width:33.0px;height:1px;background:#e6e9d8"></div>
<div class="ab" style="left:627.5px;top:362.74px;width:33.0px;height:1px;background:#e6e9d8"></div>
<div class="ab" style="left:627.5px;top:373.35px;width:33.0px;height:1px;background:#e6e9d8"></div>
<div class="ab" style="left:627.5px;top:383.96px;width:33.0px;height:1px;background:#e6e9d8"></div>
<div class="ab" style="left:627.5px;top:394.57px;width:33.0px;height:1px;background:#e6e9d8"></div>
<div class="ab" style="left:659.9px;top:214.7px;width:1px;height:191.0px;background:#e4e8d8"></div>
<div class="ab" style="left:660.5px;top:224.81px;width:44.5px;height:1px;background:#e6e9d8"></div>
<div class="ab" style="left:660.5px;top:235.42px;width:44.5px;height:1px;background:#e6e9d8"></div>
<div class="ab" style="left:660.5px;top:246.03px;width:44.5px;height:1px;background:#e6e9d8"></div>
<div class="ab" style="left:660.5px;top:256.64px;width:44.5px;height:1px;background:#e6e9d8"></div>
<div class="ab" style="left:660.5px;top:267.25px;width:44.5px;height:1px;background:#e6e9d8"></div>
<div class="ab" style="left:660.5px;top:277.86px;width:44.5px;height:1px;background:#e6e9d8"></div>
<div class="ab" style="left:660.5px;top:288.47px;width:44.5px;height:1px;background:#e6e9d8"></div>
<div class="ab" style="left:660.5px;top:299.08px;width:44.5px;height:1px;background:#e6e9d8"></div>
<div class="ab" style="left:660.5px;top:309.69px;width:44.5px;height:1px;background:#e6e9d8"></div>
<div class="ab" style="left:660.5px;top:320.30px;width:44.5px;height:1px;background:#e6e9d8"></div>
<div class="ab" style="left:660.5px;top:330.91px;width:44.5px;height:1px;background:#e6e9d8"></div>
<div class="ab" style="left:660.5px;top:341.52px;width:44.5px;height:1px;background:#e6e9d8"></div>
<div class="ab" style="left:660.5px;top:352.13px;width:44.5px;height:1px;background:#e6e9d8"></div>
<div class="ab" style="left:660.5px;top:362.74px;width:44.5px;height:1px;background:#e6e9d8"></div>
<div class="ab" style="left:660.5px;top:373.35px;width:44.5px;height:1px;background:#e6e9d8"></div>
<div class="ab" style="left:660.5px;top:383.96px;width:44.5px;height:1px;background:#e6e9d8"></div>
<div class="ab" style="left:660.5px;top:394.57px;width:44.5px;height:1px;background:#e6e9d8"></div>
<div class="ab" style="left:704.4px;top:214.7px;width:1px;height:191.0px;background:#e4e8d8"></div>
<div class="ab" style="left:705.0px;top:224.81px;width:45.5px;height:1px;background:#e6e9d8"></div>
<div class="ab" style="left:705.0px;top:235.42px;width:45.5px;height:1px;background:#e6e9d8"></div>
<div class="ab" style="left:705.0px;top:246.03px;width:45.5px;height:1px;background:#e6e9d8"></div>
<div class="ab" style="left:705.0px;top:256.64px;width:45.5px;height:1px;background:#e6e9d8"></div>
<div class="ab" style="left:705.0px;top:267.25px;width:45.5px;height:1px;background:#e6e9d8"></div>
<div class="ab" style="left:705.0px;top:277.86px;width:45.5px;height:1px;background:#e6e9d8"></div>
<div class="ab" style="left:705.0px;top:288.47px;width:45.5px;height:1px;background:#e6e9d8"></div>
<div class="ab" style="left:705.0px;top:299.08px;width:45.5px;height:1px;background:#e6e9d8"></div>
<div class="ab" style="left:705.0px;top:309.69px;width:45.5px;height:1px;background:#e6e9d8"></div>
<div class="ab" style="left:705.0px;top:320.30px;width:45.5px;height:1px;background:#e6e9d8"></div>
<div class="ab" style="left:705.0px;top:330.91px;width:45.5px;height:1px;background:#e6e9d8"></div>
<div class="ab" style="left:705.0px;top:341.52px;width:45.5px;height:1px;background:#e6e9d8"></div>
<div class="ab" style="left:705.0px;top:352.13px;width:45.5px;height:1px;background:#e6e9d8"></div>
<div class="ab" style="left:705.0px;top:362.74px;width:45.5px;height:1px;background:#e6e9d8"></div>
<div class="ab" style="left:705.0px;top:373.35px;width:45.5px;height:1px;background:#e6e9d8"></div>
<div class="ab" style="left:705.0px;top:383.96px;width:45.5px;height:1px;background:#e6e9d8"></div>
<div class="ab" style="left:705.0px;top:394.57px;width:45.5px;height:1px;background:#e6e9d8"></div>
<div class="ab" style="left:749.9px;top:214.7px;width:1px;height:191.0px;background:#e4e8d8"></div>
<div class="ab" style="left:750.5px;top:224.81px;width:45.5px;height:1px;background:#e6e9d8"></div>
<div class="ab" style="left:750.5px;top:235.42px;width:45.5px;height:1px;background:#e6e9d8"></div>
<div class="ab" style="left:750.5px;top:246.03px;width:45.5px;height:1px;background:#e6e9d8"></div>
<div class="ab" style="left:750.5px;top:256.64px;width:45.5px;height:1px;background:#e6e9d8"></div>
<div class="ab" style="left:750.5px;top:267.25px;width:45.5px;height:1px;background:#e6e9d8"></div>
<div class="ab" style="left:750.5px;top:277.86px;width:45.5px;height:1px;background:#e6e9d8"></div>
<div class="ab" style="left:750.5px;top:288.47px;width:45.5px;height:1px;background:#e6e9d8"></div>
<div class="ab" style="left:750.5px;top:299.08px;width:45.5px;height:1px;background:#e6e9d8"></div>
<div class="ab" style="left:750.5px;top:309.69px;width:45.5px;height:1px;background:#e6e9d8"></div>
<div class="ab" style="left:750.5px;top:320.30px;width:45.5px;height:1px;background:#e6e9d8"></div>
<div class="ab" style="left:750.5px;top:330.91px;width:45.5px;height:1px;background:#e6e9d8"></div>
<div class="ab" style="left:750.5px;top:341.52px;width:45.5px;height:1px;background:#e6e9d8"></div>
<div class="ab" style="left:750.5px;top:352.13px;width:45.5px;height:1px;background:#e6e9d8"></div>
<div class="ab" style="left:750.5px;top:362.74px;width:45.5px;height:1px;background:#e6e9d8"></div>
<div class="ab" style="left:750.5px;top:373.35px;width:45.5px;height:1px;background:#e6e9d8"></div>
<div class="ab" style="left:750.5px;top:383.96px;width:45.5px;height:1px;background:#e6e9d8"></div>
<div class="ab" style="left:750.5px;top:394.57px;width:45.5px;height:1px;background:#e6e9d8"></div>
<div class="ab" style="left:795.4px;top:214.7px;width:1px;height:191.0px;background:#e4e8d8"></div>
<div class="ab" style="left:796.0px;top:224.81px;width:45.5px;height:1px;background:#e6e9d8"></div>
<div class="ab" style="left:796.0px;top:235.42px;width:45.5px;height:1px;background:#e6e9d8"></div>
<div class="ab" style="left:796.0px;top:246.03px;width:45.5px;height:1px;background:#e6e9d8"></div>
<div class="ab" style="left:796.0px;top:256.64px;width:45.5px;height:1px;background:#e6e9d8"></div>
<div class="ab" style="left:796.0px;top:267.25px;width:45.5px;height:1px;background:#e6e9d8"></div>
<div class="ab" style="left:796.0px;top:277.86px;width:45.5px;height:1px;background:#e6e9d8"></div>
<div class="ab" style="left:796.0px;top:288.47px;width:45.5px;height:1px;background:#e6e9d8"></div>
<div class="ab" style="left:796.0px;top:299.08px;width:45.5px;height:1px;background:#e6e9d8"></div>
<div class="ab" style="left:796.0px;top:309.69px;width:45.5px;height:1px;background:#e6e9d8"></div>
<div class="ab" style="left:796.0px;top:320.30px;width:45.5px;height:1px;background:#e6e9d8"></div>
<div class="ab" style="left:796.0px;top:330.91px;width:45.5px;height:1px;background:#e6e9d8"></div>
<div class="ab" style="left:796.0px;top:341.52px;width:45.5px;height:1px;background:#e6e9d8"></div>
<div class="ab" style="left:796.0px;top:352.13px;width:45.5px;height:1px;background:#e6e9d8"></div>
<div class="ab" style="left:796.0px;top:362.74px;width:45.5px;height:1px;background:#e6e9d8"></div>
<div class="ab" style="left:796.0px;top:373.35px;width:45.5px;height:1px;background:#e6e9d8"></div>
<div class="ab" style="left:796.0px;top:383.96px;width:45.5px;height:1px;background:#e6e9d8"></div>
<div class="ab" style="left:796.0px;top:394.57px;width:45.5px;height:1px;background:#e6e9d8"></div>
<div class="ab" style="left:840.9px;top:214.7px;width:1px;height:191.0px;background:#e4e8d8"></div>
<div class="ab" style="left:841.5px;top:224.81px;width:44.5px;height:1px;background:#e6e9d8"></div>
<div class="ab" style="left:841.5px;top:235.42px;width:44.5px;height:1px;background:#e6e9d8"></div>
<div class="ab" style="left:841.5px;top:246.03px;width:44.5px;height:1px;background:#e6e9d8"></div>
<div class="ab" style="left:841.5px;top:256.64px;width:44.5px;height:1px;background:#e6e9d8"></div>
<div class="ab" style="left:841.5px;top:267.25px;width:44.5px;height:1px;background:#e6e9d8"></div>
<div class="ab" style="left:841.5px;top:277.86px;width:44.5px;height:1px;background:#e6e9d8"></div>
<div class="ab" style="left:841.5px;top:288.47px;width:44.5px;height:1px;background:#e6e9d8"></div>
<div class="ab" style="left:841.5px;top:299.08px;width:44.5px;height:1px;background:#e6e9d8"></div>
<div class="ab" style="left:841.5px;top:309.69px;width:44.5px;height:1px;background:#e6e9d8"></div>
<div class="ab" style="left:841.5px;top:320.30px;width:44.5px;height:1px;background:#e6e9d8"></div>
<div class="ab" style="left:841.5px;top:330.91px;width:44.5px;height:1px;background:#e6e9d8"></div>
<div class="ab" style="left:841.5px;top:341.52px;width:44.5px;height:1px;background:#e6e9d8"></div>
<div class="ab" style="left:841.5px;top:352.13px;width:44.5px;height:1px;background:#e6e9d8"></div>
<div class="ab" style="left:841.5px;top:362.74px;width:44.5px;height:1px;background:#e6e9d8"></div>
<div class="ab" style="left:841.5px;top:373.35px;width:44.5px;height:1px;background:#e6e9d8"></div>
<div class="ab" style="left:841.5px;top:383.96px;width:44.5px;height:1px;background:#e6e9d8"></div>
<div class="ab" style="left:841.5px;top:394.57px;width:44.5px;height:1px;background:#e6e9d8"></div>
<div class="ab" style="left:885.4px;top:214.7px;width:1px;height:191.0px;background:#e4e8d8"></div>
<div class="ab" style="left:886.0px;top:224.81px;width:45.5px;height:1px;background:#e6e9d8"></div>
<div class="ab" style="left:886.0px;top:235.42px;width:45.5px;height:1px;background:#e6e9d8"></div>
<div class="ab" style="left:886.0px;top:246.03px;width:45.5px;height:1px;background:#e6e9d8"></div>
<div class="ab" style="left:886.0px;top:256.64px;width:45.5px;height:1px;background:#e6e9d8"></div>
<div class="ab" style="left:886.0px;top:267.25px;width:45.5px;height:1px;background:#e6e9d8"></div>
<div class="ab" style="left:886.0px;top:277.86px;width:45.5px;height:1px;background:#e6e9d8"></div>
<div class="ab" style="left:886.0px;top:288.47px;width:45.5px;height:1px;background:#e6e9d8"></div>
<div class="ab" style="left:886.0px;top:299.08px;width:45.5px;height:1px;background:#e6e9d8"></div>
<div class="ab" style="left:886.0px;top:309.69px;width:45.5px;height:1px;background:#e6e9d8"></div>
<div class="ab" style="left:886.0px;top:320.30px;width:45.5px;height:1px;background:#e6e9d8"></div>
<div class="ab" style="left:886.0px;top:330.91px;width:45.5px;height:1px;background:#e6e9d8"></div>
<div class="ab" style="left:886.0px;top:341.52px;width:45.5px;height:1px;background:#e6e9d8"></div>
<div class="ab" style="left:886.0px;top:352.13px;width:45.5px;height:1px;background:#e6e9d8"></div>
<div class="ab" style="left:886.0px;top:362.74px;width:45.5px;height:1px;background:#e6e9d8"></div>
<div class="ab" style="left:886.0px;top:373.35px;width:45.5px;height:1px;background:#e6e9d8"></div>
<div class="ab" style="left:886.0px;top:383.96px;width:45.5px;height:1px;background:#e6e9d8"></div>
<div class="ab" style="left:886.0px;top:394.57px;width:45.5px;height:1px;background:#e6e9d8"></div>
<div class="ab" style="left:930.9px;top:214.7px;width:1px;height:191.0px;background:#e4e8d8"></div>
<div class="t" style="left:78.50px;top:183px;font-size:7.6px;color:#fff;font-weight:bold;transform:scaleX(0.86);transform-origin:0 0;text-shadow:0.3px 0 0 #fff">Employee</div>
<div class="t" style="left:78.50px;top:194px;font-size:7.6px;color:#fff;font-weight:bold;transform:scaleX(0.86);transform-origin:0 0;text-shadow:0.3px 0 0 #fff">Name</div>
<div class="t" style="left:159.00px;top:194px;font-size:7.6px;color:#fff;font-weight:bold;transform:scaleX(0.86);transform-origin:0 0;text-shadow:0.3px 0 0 #fff">Title</div>
<div class="t" style="left:178.40px;width:200px;text-align:center;top:183px;font-size:7.6px;color:#fff;font-weight:bold;transform:scaleX(0.86);transform-origin:50% 0;text-shadow:0.3px 0 0 #fff">Hire</div>
<div class="t" style="left:178.40px;width:200px;text-align:center;top:194px;font-size:7.6px;color:#fff;font-weight:bold;transform:scaleX(0.86);transform-origin:50% 0;text-shadow:0.3px 0 0 #fff">Date</div>
<div class="t" style="left:220.50px;width:200px;text-align:center;top:183px;font-size:7.6px;color:#fff;font-weight:bold;transform:scaleX(0.86);transform-origin:50% 0;text-shadow:0.3px 0 0 #fff">Hire</div>
<div class="t" style="left:220.50px;width:200px;text-align:center;top:194px;font-size:7.6px;color:#fff;font-weight:bold;transform:scaleX(0.86);transform-origin:50% 0;text-shadow:0.3px 0 0 #fff">Month</div>
<div class="t" style="left:254.00px;width:200px;text-align:center;top:183px;font-size:7.6px;color:#fff;font-weight:bold;transform:scaleX(0.86);transform-origin:50% 0;text-shadow:0.3px 0 0 #fff">End</div>
<div class="t" style="left:254.00px;width:200px;text-align:center;top:194px;font-size:7.6px;color:#fff;font-weight:bold;transform:scaleX(0.86);transform-origin:50% 0;text-shadow:0.3px 0 0 #fff">Month</div>
<div class="t" style="left:289.50px;width:200px;text-align:center;top:183px;font-size:7.6px;color:#fff;font-weight:bold;transform:scaleX(0.86);transform-origin:50% 0;text-shadow:0.3px 0 0 #fff">Annual</div>
<div class="t" style="left:289.50px;width:200px;text-align:center;top:194px;font-size:7.6px;color:#fff;font-weight:bold;transform:scaleX(0.86);transform-origin:50% 0;text-shadow:0.3px 0 0 #fff">Hours</div>
<div class="t" style="left:328.50px;width:200px;text-align:center;top:194px;font-size:7.6px;color:#fff;font-weight:bold;transform:scaleX(0.86);transform-origin:50% 0;text-shadow:0.3px 0 0 #fff">Rate</div>
<div class="t" style="left:371.50px;width:200px;text-align:center;top:194px;font-size:7.6px;color:#fff;font-weight:bold;transform:scaleX(0.86);transform-origin:50% 0;text-shadow:0.3px 0 0 #fff">Salary</div>
<div class="t" style="left:410.00px;width:200px;text-align:center;top:183px;font-size:7.6px;color:#fff;font-weight:bold;transform:scaleX(0.86);transform-origin:50% 0;text-shadow:0.3px 0 0 #fff">Increase</div>
<div class="t" style="left:410.00px;width:200px;text-align:center;top:194px;font-size:7.6px;color:#fff;font-weight:bold;transform:scaleX(0.86);transform-origin:50% 0;text-shadow:0.3px 0 0 #fff">Month</div>
<div class="t" style="left:443.00px;width:200px;text-align:center;top:183px;font-size:7.6px;color:#fff;font-weight:bold;transform:scaleX(0.86);transform-origin:50% 0;text-shadow:0.3px 0 0 #fff">%</div>
<div class="t" style="left:443.00px;width:200px;text-align:center;top:194px;font-size:7.6px;color:#fff;font-weight:bold;transform:scaleX(0.86);transform-origin:50% 0;text-shadow:0.3px 0 0 #fff">Increase</div>
<div class="t" style="left:476.30px;width:200px;text-align:center;top:183px;font-size:7.6px;color:#fff;font-weight:bold;transform:scaleX(0.86);transform-origin:50% 0;text-shadow:0.3px 0 0 #fff">$</div>
<div class="t" style="left:476.30px;width:200px;text-align:center;top:194px;font-size:7.6px;color:#fff;font-weight:bold;transform:scaleX(0.86);transform-origin:50% 0;text-shadow:0.3px 0 0 #fff">Increase</div>
<div class="t" style="left:510.00px;width:200px;text-align:center;top:183px;font-size:7.6px;color:#fff;font-weight:bold;transform:scaleX(0.86);transform-origin:50% 0;text-shadow:0.3px 0 0 #fff">Ending</div>
<div class="t" style="left:510.00px;width:200px;text-align:center;top:194px;font-size:7.6px;color:#fff;font-weight:bold;transform:scaleX(0.86);transform-origin:50% 0;text-shadow:0.3px 0 0 #fff">Salary</div>
<div class="t" style="left:544.00px;width:200px;text-align:center;top:184px;font-size:7.6px;color:#fff;font-weight:bold;transform:scaleX(0.86);transform-origin:50% 0;text-shadow:0.3px 0 0 #fff">Annual</div>
<div class="t" style="left:544.00px;width:200px;text-align:center;top:194px;font-size:7.6px;color:#fff;font-weight:bold;transform:scaleX(0.86);transform-origin:50% 0;text-shadow:0.3px 0 0 #fff">Bonus $</div>
<div class="t" style="left:583.00px;width:200px;text-align:center;top:183px;font-size:7.6px;color:#fff;font-weight:bold;transform:scaleX(0.86);transform-origin:50% 0;text-shadow:0.3px 0 0 #fff">Shift 2</div>
<div class="t" style="left:583.00px;width:200px;text-align:center;top:194px;font-size:7.6px;color:#fff;font-weight:bold;transform:scaleX(0.86);transform-origin:50% 0;text-shadow:0.3px 0 0 #fff">Annual Hrs</div>
<div class="t" style="left:627.80px;width:200px;text-align:center;top:183px;font-size:7.6px;color:#fff;font-weight:bold;transform:scaleX(0.86);transform-origin:50% 0;text-shadow:0.3px 0 0 #fff">Shift 3</div>
<div class="t" style="left:627.80px;width:200px;text-align:center;top:194px;font-size:7.6px;color:#fff;font-weight:bold;transform:scaleX(0.86);transform-origin:50% 0;text-shadow:0.3px 0 0 #fff">Annual Hrs</div>
<div class="t" style="left:673.20px;width:200px;text-align:center;top:183px;font-size:7.6px;color:#fff;font-weight:bold;transform:scaleX(0.86);transform-origin:50% 0;text-shadow:0.3px 0 0 #fff">Weekend</div>
<div class="t" style="left:673.20px;width:200px;text-align:center;top:194px;font-size:7.6px;color:#fff;font-weight:bold;transform:scaleX(0.86);transform-origin:50% 0;text-shadow:0.3px 0 0 #fff">Annual Hrs</div>
<div class="t" style="left:718.50px;width:200px;text-align:center;top:183px;font-size:7.6px;color:#fff;font-weight:bold;transform:scaleX(0.86);transform-origin:50% 0;text-shadow:0.3px 0 0 #fff">Call In</div>
<div class="t" style="left:718.50px;width:200px;text-align:center;top:194px;font-size:7.6px;color:#fff;font-weight:bold;transform:scaleX(0.86);transform-origin:50% 0;text-shadow:0.3px 0 0 #fff">Annual Hrs</div>
<div class="t" style="left:764.00px;width:200px;text-align:center;top:183px;font-size:7.6px;color:#fff;font-weight:bold;transform:scaleX(0.86);transform-origin:50% 0;text-shadow:0.3px 0 0 #fff">Call Off</div>
<div class="t" style="left:764.00px;width:200px;text-align:center;top:194px;font-size:7.6px;color:#fff;font-weight:bold;transform:scaleX(0.86);transform-origin:50% 0;text-shadow:0.3px 0 0 #fff">Annual Hrs</div>
<div class="t" style="left:808.50px;width:200px;text-align:center;top:183px;font-size:7.6px;color:#fff;font-weight:bold;transform:scaleX(0.86);transform-origin:50% 0;text-shadow:0.3px 0 0 #fff">PTO</div>
<div class="t" style="left:808.50px;width:200px;text-align:center;top:194px;font-size:7.6px;color:#fff;font-weight:bold;transform:scaleX(0.86);transform-origin:50% 0;text-shadow:0.3px 0 0 #fff">Annual Hrs</div>
<div class="t" style="left:78.70px;top:204px;font-size:8.6px;color:#4f81bd;font-weight:bold;transform:scaleX(0.86);transform-origin:0 0;">Hospital - Room &amp; Board</div>
<div class="t" style="left:78.80px;top:217px;font-size:8.1px;color:#2e2e2e;transform:scaleX(0.87);transform-origin:0 0;">Christy Y. Lyons</div>
<div class="t" style="left:159.30px;top:217px;font-size:8.1px;color:#2e2e2e;transform:scaleX(0.87);transform-origin:0 0;">Assistant</div>
<div class="t" style="left:178.50px;width:200px;text-align:center;top:217px;font-size:8.1px;color:#2e2e2e;transform:scaleX(0.92);transform-origin:50% 0;">11/1/2011</div>
<div class="t" style="left:207.20px;width:200px;text-align:right;top:217px;font-size:8.1px;color:#2e2e2e;transform:scaleX(0.92);transform-origin:100% 0;">2,080.0</div>
<div class="t" style="left:248.20px;width:200px;text-align:right;top:217px;font-size:8.1px;color:#2e2e2e;transform:scaleX(0.92);transform-origin:100% 0;">30.30</div>
<div class="t" style="left:292.20px;width:200px;text-align:right;top:217px;font-size:8.1px;color:#2e2e2e;transform:scaleX(0.92);transform-origin:100% 0;">63,024.00</div>
<div class="t" style="left:410.00px;width:200px;text-align:center;top:217px;font-size:8.1px;color:#2e2e2e;transform:scaleX(0.87);transform-origin:50% 0;">Mar</div>
<div class="t" style="left:358.20px;width:200px;text-align:right;top:217px;font-size:8.1px;color:#2e2e2e;transform:scaleX(0.92);transform-origin:100% 0;">3.00%</div>
<div class="t" style="left:426.20px;width:200px;text-align:right;top:217px;font-size:8.1px;color:#2e2e2e;transform:scaleX(0.92);transform-origin:100% 0;">64,915</div>
<div class="t" style="left:503.70px;width:200px;text-align:right;top:217px;font-size:8.1px;color:#2e2e2e;transform:scaleX(0.92);transform-origin:100% 0;">100</div>
<div class="t" style="left:78.80px;top:227px;font-size:8.1px;color:#2e2e2e;transform:scaleX(0.87);transform-origin:0 0;">Wesley O. Moser</div>
<div class="t" style="left:159.30px;top:227px;font-size:8.1px;color:#2e2e2e;transform:scaleX(0.87);transform-origin:0 0;">Physician of Family Medicine</div>
<div class="t" style="left:178.50px;width:200px;text-align:center;top:227px;font-size:8.1px;color:#2e2e2e;transform:scaleX(0.92);transform-origin:50% 0;">10/1/2010</div>
<div class="t" style="left:207.20px;width:200px;text-align:right;top:227px;font-size:8.1px;color:#2e2e2e;transform:scaleX(0.92);transform-origin:100% 0;">2,080.0</div>
<div class="t" style="left:248.20px;width:200px;text-align:right;top:227px;font-size:8.1px;color:#2e2e2e;transform:scaleX(0.92);transform-origin:100% 0;">75.00</div>
<div class="t" style="left:292.20px;width:200px;text-align:right;top:227px;font-size:8.1px;color:#2e2e2e;transform:scaleX(0.92);transform-origin:100% 0;">156,000.00</div>
<div class="t" style="left:358.20px;width:200px;text-align:right;top:227px;font-size:8.1px;color:#2e2e2e;transform:scaleX(0.92);transform-origin:100% 0;">3.00%</div>
<div class="t" style="left:426.20px;width:200px;text-align:right;top:227px;font-size:8.1px;color:#2e2e2e;transform:scaleX(0.92);transform-origin:100% 0;">160,680</div>
<div class="t" style="left:459.20px;width:200px;text-align:right;top:227px;font-size:8.1px;color:#2e2e2e;transform:scaleX(0.92);transform-origin:100% 0;">3,000</div>
<div class="t" style="left:78.80px;top:238px;font-size:8.1px;color:#2e2e2e;transform:scaleX(0.87);transform-origin:0 0;">Lucy I. Dickinson</div>
<div class="t" style="left:159.30px;top:238px;font-size:8.1px;color:#2e2e2e;transform:scaleX(0.87);transform-origin:0 0;">Nurse Practitioner</div>
<div class="t" style="left:178.50px;width:200px;text-align:center;top:238px;font-size:8.1px;color:#2e2e2e;transform:scaleX(0.92);transform-origin:50% 0;">2/4/2002</div>
<div class="t" style="left:207.20px;width:200px;text-align:right;top:238px;font-size:8.1px;color:#2e2e2e;transform:scaleX(0.92);transform-origin:100% 0;">2,080.0</div>
<div class="t" style="left:248.20px;width:200px;text-align:right;top:238px;font-size:8.1px;color:#2e2e2e;transform:scaleX(0.92);transform-origin:100% 0;">36.55</div>
<div class="t" style="left:292.20px;width:200px;text-align:right;top:238px;font-size:8.1px;color:#2e2e2e;transform:scaleX(0.92);transform-origin:100% 0;">76,024.00</div>
<div class="t" style="left:358.20px;width:200px;text-align:right;top:238px;font-size:8.1px;color:#2e2e2e;transform:scaleX(0.92);transform-origin:100% 0;">3.00%</div>
<div class="t" style="left:426.20px;width:200px;text-align:right;top:238px;font-size:8.1px;color:#2e2e2e;transform:scaleX(0.92);transform-origin:100% 0;">78,305</div>
<div class="t" style="left:549.20px;width:200px;text-align:right;top:238px;font-size:8.1px;color:#2e2e2e;transform:scaleX(0.92);transform-origin:100% 0;">100</div>
<div class="t" style="left:78.80px;top:249px;font-size:8.1px;color:#2e2e2e;transform:scaleX(0.87);transform-origin:0 0;">Susan B. Abbott</div>
<div class="t" style="left:159.30px;top:249px;font-size:8.1px;color:#2e2e2e;transform:scaleX(0.87);transform-origin:0 0;">Nurse Practitioner</div>
<div class="t" style="left:178.50px;width:200px;text-align:center;top:249px;font-size:8.1px;color:#2e2e2e;transform:scaleX(0.92);transform-origin:50% 0;">9/3/2007</div>
<div class="t" style="left:207.20px;width:200px;text-align:right;top:249px;font-size:8.1px;color:#2e2e2e;transform:scaleX(0.92);transform-origin:100% 0;">2,080.0</div>
<div class="t" style="left:248.20px;width:200px;text-align:right;top:249px;font-size:8.1px;color:#2e2e2e;transform:scaleX(0.92);transform-origin:100% 0;">32.52</div>
<div class="t" style="left:292.20px;width:200px;text-align:right;top:249px;font-size:8.1px;color:#2e2e2e;transform:scaleX(0.92);transform-origin:100% 0;">67,641.60</div>
<div class="t" style="left:358.20px;width:200px;text-align:right;top:249px;font-size:8.1px;color:#2e2e2e;transform:scaleX(0.92);transform-origin:100% 0;">3.00%</div>
<div class="t" style="left:426.20px;width:200px;text-align:right;top:249px;font-size:8.1px;color:#2e2e2e;transform:scaleX(0.92);transform-origin:100% 0;">69,671</div>
<div class="t" style="left:594.70px;width:200px;text-align:right;top:249px;font-size:8.1px;color:#2e2e2e;transform:scaleX(0.92);transform-origin:100% 0;">100</div>
<div class="t" style="left:78.80px;top:259px;font-size:8.1px;color:#2e2e2e;transform:scaleX(0.87);transform-origin:0 0;">Nancy O. Hobbs</div>
<div class="t" style="left:159.30px;top:259px;font-size:8.1px;color:#2e2e2e;transform:scaleX(0.87);transform-origin:0 0;">Physician of Family Medicine</div>
<div class="t" style="left:178.50px;width:200px;text-align:center;top:259px;font-size:8.1px;color:#2e2e2e;transform:scaleX(0.92);transform-origin:50% 0;">7/3/2010</div>
<div class="t" style="left:207.20px;width:200px;text-align:right;top:259px;font-size:8.1px;color:#2e2e2e;transform:scaleX(0.92);transform-origin:100% 0;">2,080.0</div>
<div class="t" style="left:248.20px;width:200px;text-align:right;top:259px;font-size:8.1px;color:#2e2e2e;transform:scaleX(0.92);transform-origin:100% 0;">81.05</div>
<div class="t" style="left:292.20px;width:200px;text-align:right;top:259px;font-size:8.1px;color:#2e2e2e;transform:scaleX(0.92);transform-origin:100% 0;">168,584.00</div>
<div class="t" style="left:358.20px;width:200px;text-align:right;top:259px;font-size:8.1px;color:#2e2e2e;transform:scaleX(0.92);transform-origin:100% 0;">1.00%</div>
<div class="t" style="left:426.20px;width:200px;text-align:right;top:259px;font-size:8.1px;color:#2e2e2e;transform:scaleX(0.92);transform-origin:100% 0;">170,270</div>
<div class="t" style="left:459.20px;width:200px;text-align:right;top:259px;font-size:8.1px;color:#2e2e2e;transform:scaleX(0.92);transform-origin:100% 0;">3,000</div>
<div class="t" style="left:78.80px;top:270px;font-size:8.1px;color:#2e2e2e;transform:scaleX(0.87);transform-origin:0 0;">Monica O. Dodson</div>
<div class="t" style="left:159.30px;top:270px;font-size:8.1px;color:#2e2e2e;transform:scaleX(0.87);transform-origin:0 0;">Janitor</div>
<div class="t" style="left:178.50px;width:200px;text-align:center;top:270px;font-size:8.1px;color:#2e2e2e;transform:scaleX(0.92);transform-origin:50% 0;">3/9/2008</div>
<div class="t" style="left:207.20px;width:200px;text-align:right;top:270px;font-size:8.1px;color:#2e2e2e;transform:scaleX(0.92);transform-origin:100% 0;">2,080.0</div>
<div class="t" style="left:248.20px;width:200px;text-align:right;top:270px;font-size:8.1px;color:#2e2e2e;transform:scaleX(0.92);transform-origin:100% 0;">16.38</div>
<div class="t" style="left:292.20px;width:200px;text-align:right;top:270px;font-size:8.1px;color:#2e2e2e;transform:scaleX(0.92);transform-origin:100% 0;">34,070.40</div>
<div class="t" style="left:358.20px;width:200px;text-align:right;top:270px;font-size:8.1px;color:#2e2e2e;transform:scaleX(0.92);transform-origin:100% 0;">5.00%</div>
<div class="t" style="left:426.20px;width:200px;text-align:right;top:270px;font-size:8.1px;color:#2e2e2e;transform:scaleX(0.92);transform-origin:100% 0;">35,774</div>
<div class="t" style="left:640.20px;width:200px;text-align:right;top:270px;font-size:8.1px;color:#2e2e2e;transform:scaleX(0.92);transform-origin:100% 0;">100</div>
<div class="t" style="left:78.80px;top:280px;font-size:8.1px;color:#2e2e2e;transform:scaleX(0.87);transform-origin:0 0;">Justin P. Spencer</div>
<div class="t" style="left:159.30px;top:280px;font-size:8.1px;color:#2e2e2e;transform:scaleX(0.87);transform-origin:0 0;">Associate Chair</div>
<div class="t" style="left:178.50px;width:200px;text-align:center;top:280px;font-size:8.1px;color:#2e2e2e;transform:scaleX(0.92);transform-origin:50% 0;">2/12/2011</div>
<div class="t" style="left:207.20px;width:200px;text-align:right;top:280px;font-size:8.1px;color:#2e2e2e;transform:scaleX(0.92);transform-origin:100% 0;">2,080.0</div>
<div class="t" style="left:248.20px;width:200px;text-align:right;top:280px;font-size:8.1px;color:#2e2e2e;transform:scaleX(0.92);transform-origin:100% 0;">47.80</div>
<div class="t" style="left:292.20px;width:200px;text-align:right;top:280px;font-size:8.1px;color:#2e2e2e;transform:scaleX(0.92);transform-origin:100% 0;">99,424.00</div>
<div class="t" style="left:410.00px;width:200px;text-align:center;top:280px;font-size:8.1px;color:#2e2e2e;transform:scaleX(0.87);transform-origin:50% 0;">Feb</div>
<div class="t" style="left:392.20px;width:200px;text-align:right;top:280px;font-size:8.1px;color:#2e2e2e;transform:scaleX(0.92);transform-origin:100% 0;">1,000.00</div>
<div class="t" style="left:426.20px;width:200px;text-align:right;top:280px;font-size:8.1px;color:#2e2e2e;transform:scaleX(0.92);transform-origin:100% 0;">100,424</div>
<div class="t" style="left:684.70px;width:200px;text-align:right;top:280px;font-size:8.1px;color:#2e2e2e;transform:scaleX(0.92);transform-origin:100% 0;">100</div>
<div class="t" style="left:78.80px;top:291px;font-size:8.1px;color:#2e2e2e;transform:scaleX(0.87);transform-origin:0 0;">Margaret U. Burgess</div>
<div class="t" style="left:159.30px;top:291px;font-size:8.1px;color:#2e2e2e;transform:scaleX(0.87);transform-origin:0 0;">Technician</div>
<div class="t" style="left:178.50px;width:200px;text-align:center;top:291px;font-size:8.1px;color:#2e2e2e;transform:scaleX(0.92);transform-origin:50% 0;">2/6/2011</div>
<div class="t" style="left:207.20px;width:200px;text-align:right;top:291px;font-size:8.1px;color:#2e2e2e;transform:scaleX(0.92);transform-origin:100% 0;">2,080.0</div>
<div class="t" style="left:248.20px;width:200px;text-align:right;top:291px;font-size:8.1px;color:#2e2e2e;transform:scaleX(0.92);transform-origin:100% 0;">27.83</div>
<div class="t" style="left:292.20px;width:200px;text-align:right;top:291px;font-size:8.1px;color:#2e2e2e;transform:scaleX(0.92);transform-origin:100% 0;">57,886.40</div>
<div class="t" style="left:358.20px;width:200px;text-align:right;top:291px;font-size:8.1px;color:#2e2e2e;transform:scaleX(0.92);transform-origin:100% 0;">4.00%</div>
<div class="t" style="left:426.20px;width:200px;text-align:right;top:291px;font-size:8.1px;color:#2e2e2e;transform:scaleX(0.92);transform-origin:100% 0;">60,202</div>
<div class="t" style="left:730.20px;width:200px;text-align:right;top:291px;font-size:8.1px;color:#2e2e2e;transform:scaleX(0.92);transform-origin:100% 0;">100</div>
<div class="t" style="left:78.80px;top:302px;font-size:8.1px;color:#2e2e2e;transform:scaleX(0.87);transform-origin:0 0;">Philip I. Liu</div>
<div class="t" style="left:159.30px;top:302px;font-size:8.1px;color:#2e2e2e;transform:scaleX(0.87);transform-origin:0 0;">Technician</div>
<div class="t" style="left:178.50px;width:200px;text-align:center;top:302px;font-size:8.1px;color:#2e2e2e;transform:scaleX(0.92);transform-origin:50% 0;">7/6/2010</div>
<div class="t" style="left:207.20px;width:200px;text-align:right;top:302px;font-size:8.1px;color:#2e2e2e;transform:scaleX(0.92);transform-origin:100% 0;">2,080.0</div>
<div class="t" style="left:248.20px;width:200px;text-align:right;top:302px;font-size:8.1px;color:#2e2e2e;transform:scaleX(0.92);transform-origin:100% 0;">28.68</div>
<div class="t" style="left:292.20px;width:200px;text-align:right;top:302px;font-size:8.1px;color:#2e2e2e;transform:scaleX(0.92);transform-origin:100% 0;">59,654.40</div>
<div class="t" style="left:358.20px;width:200px;text-align:right;top:302px;font-size:8.1px;color:#2e2e2e;transform:scaleX(0.92);transform-origin:100% 0;">2.00%</div>
<div class="t" style="left:426.20px;width:200px;text-align:right;top:302px;font-size:8.1px;color:#2e2e2e;transform:scaleX(0.92);transform-origin:100% 0;">60,847</div>
<div class="t" style="left:78.80px;top:312px;font-size:8.1px;color:#2e2e2e;transform:scaleX(0.87);transform-origin:0 0;">Miriam O. Wong</div>
<div class="t" style="left:159.30px;top:312px;font-size:8.1px;color:#2e2e2e;transform:scaleX(0.87);transform-origin:0 0;">Dining Server</div>
<div class="t" style="left:178.50px;width:200px;text-align:center;top:312px;font-size:8.1px;color:#2e2e2e;transform:scaleX(0.92);transform-origin:50% 0;">7/1/2011</div>
<div class="t" style="left:207.20px;width:200px;text-align:right;top:312px;font-size:8.1px;color:#2e2e2e;transform:scaleX(0.92);transform-origin:100% 0;">2,080.0</div>
<div class="t" style="left:248.20px;width:200px;text-align:right;top:312px;font-size:8.1px;color:#2e2e2e;transform:scaleX(0.92);transform-origin:100% 0;">14.98</div>
<div class="t" style="left:292.20px;width:200px;text-align:right;top:312px;font-size:8.1px;color:#2e2e2e;transform:scaleX(0.92);transform-origin:100% 0;">31,158.40</div>
<div class="t" style="left:410.00px;width:200px;text-align:center;top:312px;font-size:8.1px;color:#2e2e2e;transform:scaleX(0.87);transform-origin:50% 0;">Feb</div>
<div class="t" style="left:392.20px;width:200px;text-align:right;top:312px;font-size:8.1px;color:#2e2e2e;transform:scaleX(0.92);transform-origin:100% 0;">500.00</div>
<div class="t" style="left:426.20px;width:200px;text-align:right;top:312px;font-size:8.1px;color:#2e2e2e;transform:scaleX(0.92);transform-origin:100% 0;">31,658</div>
<div class="t" style="left:78.80px;top:323px;font-size:8.1px;color:#2e2e2e;transform:scaleX(0.87);transform-origin:0 0;">Miriam L. Blackburn</div>
<div class="t" style="left:159.30px;top:323px;font-size:8.1px;color:#2e2e2e;transform:scaleX(0.87);transform-origin:0 0;">Dining Server</div>
<div class="t" style="left:178.50px;width:200px;text-align:center;top:323px;font-size:8.1px;color:#2e2e2e;transform:scaleX(0.92);transform-origin:50% 0;">7/10/2011</div>
<div class="t" style="left:207.20px;width:200px;text-align:right;top:323px;font-size:8.1px;color:#2e2e2e;transform:scaleX(0.92);transform-origin:100% 0;">2,080.0</div>
<div class="t" style="left:248.20px;width:200px;text-align:right;top:323px;font-size:8.1px;color:#2e2e2e;transform:scaleX(0.92);transform-origin:100% 0;">15.12</div>
<div class="t" style="left:292.20px;width:200px;text-align:right;top:323px;font-size:8.1px;color:#2e2e2e;transform:scaleX(0.92);transform-origin:100% 0;">31,449.60</div>
<div class="t" style="left:358.20px;width:200px;text-align:right;top:323px;font-size:8.1px;color:#2e2e2e;transform:scaleX(0.92);transform-origin:100% 0;">5.00%</div>
<div class="t" style="left:426.20px;width:200px;text-align:right;top:323px;font-size:8.1px;color:#2e2e2e;transform:scaleX(0.92);transform-origin:100% 0;">33,022</div>
<div class="t" style="left:78.80px;top:333px;font-size:8.1px;color:#2e2e2e;transform:scaleX(0.87);transform-origin:0 0;">New Hire</div>
<div class="t" style="left:159.30px;top:333px;font-size:8.1px;color:#2e2e2e;transform:scaleX(0.87);transform-origin:0 0;">Cook</div>
<div class="t" style="left:220.75px;width:200px;text-align:center;top:333px;font-size:8.1px;color:#2e2e2e;transform:scaleX(0.87);transform-origin:50% 0;">Jan</div>
<div class="t" style="left:207.20px;width:200px;text-align:right;top:333px;font-size:8.1px;color:#2e2e2e;transform:scaleX(0.92);transform-origin:100% 0;">2,080.0</div>
<div class="t" style="left:248.20px;width:200px;text-align:right;top:333px;font-size:8.1px;color:#2e2e2e;transform:scaleX(0.92);transform-origin:100% 0;">15.75</div>
<div class="t" style="left:292.20px;width:200px;text-align:right;top:333px;font-size:8.1px;color:#2e2e2e;transform:scaleX(0.92);transform-origin:100% 0;">32,760.00</div>
<div class="t" style="left:426.20px;width:200px;text-align:right;top:333px;font-size:8.1px;color:#2e2e2e;transform:scaleX(0.92);transform-origin:100% 0;">32,760</div>
<div class="t" style="left:78.80px;top:344px;font-size:8.1px;color:#2e2e2e;transform:scaleX(0.87);transform-origin:0 0;">New Hire</div>
<div class="t" style="left:159.30px;top:344px;font-size:8.1px;color:#2e2e2e;transform:scaleX(0.87);transform-origin:0 0;">Janitor</div>
<div class="t" style="left:220.75px;width:200px;text-align:center;top:344px;font-size:8.1px;color:#2e2e2e;transform:scaleX(0.87);transform-origin:50% 0;">Mar</div>
<div class="t" style="left:207.20px;width:200px;text-align:right;top:344px;font-size:8.1px;color:#2e2e2e;transform:scaleX(0.92);transform-origin:100% 0;">2,080.0</div>
<div class="t" style="left:248.20px;width:200px;text-align:right;top:344px;font-size:8.1px;color:#2e2e2e;transform:scaleX(0.92);transform-origin:100% 0;">16.25</div>
<div class="t" style="left:292.20px;width:200px;text-align:right;top:344px;font-size:8.1px;color:#2e2e2e;transform:scaleX(0.92);transform-origin:100% 0;">33,800.00</div>
<div class="t" style="left:426.20px;width:200px;text-align:right;top:344px;font-size:8.1px;color:#2e2e2e;transform:scaleX(0.92);transform-origin:100% 0;">33,800</div>
<div class="t" style="left:292.20px;width:200px;text-align:right;top:355px;font-size:8.1px;color:#2e2e2e;transform:scaleX(0.92);transform-origin:100% 0;">0.00</div>
<div class="t" style="left:426.20px;width:200px;text-align:right;top:355px;font-size:8.1px;color:#2e2e2e;transform:scaleX(0.92);transform-origin:100% 0;">0</div>
<div class="t" style="left:292.20px;width:200px;text-align:right;top:365px;font-size:8.1px;color:#2e2e2e;transform:scaleX(0.92);transform-origin:100% 0;">0.00</div>
<div class="t" style="left:426.20px;width:200px;text-align:right;top:365px;font-size:8.1px;color:#2e2e2e;transform:scaleX(0.92);transform-origin:100% 0;">0</div>
<div class="t" style="left:292.20px;width:200px;text-align:right;top:376px;font-size:8.1px;color:#2e2e2e;transform:scaleX(0.92);transform-origin:100% 0;">0.00</div>
<div class="t" style="left:426.20px;width:200px;text-align:right;top:376px;font-size:8.1px;color:#2e2e2e;transform:scaleX(0.92);transform-origin:100% 0;">0</div>
<div class="t" style="left:292.20px;width:200px;text-align:right;top:386px;font-size:8.1px;color:#2e2e2e;transform:scaleX(0.92);transform-origin:100% 0;">0.00</div>
<div class="t" style="left:426.20px;width:200px;text-align:right;top:386px;font-size:8.1px;color:#2e2e2e;transform:scaleX(0.92);transform-origin:100% 0;">0</div>
<div class="t" style="left:292.20px;width:200px;text-align:right;top:397px;font-size:8.1px;color:#2e2e2e;transform:scaleX(0.92);transform-origin:100% 0;">0.00</div>
<div class="t" style="left:426.20px;width:200px;text-align:right;top:397px;font-size:8.1px;color:#2e2e2e;transform:scaleX(0.92);transform-origin:100% 0;">0</div>
<div class="t" style="left:595.00px;top:410px;font-size:8px;color:#111;font-weight:bold;transform:scaleX(0.84);transform-origin:0 0;">Total</div>
<div class="ab" style="left:559px;top:418px;width:400px;height:1.5px;background:#1a1d22"></div>
<div class="ab" style="left:559px;top:418px;width:1.5px;height:70px;background:#1a1d22"></div>
<div class="t" style="left:566.70px;top:421px;font-size:8.1px;color:#444;transform:scaleX(0.92);transform-origin:0 0;">60000</div>
<div class="t" style="left:549.60px;width:200px;text-align:center;top:421px;font-size:8.1px;color:#3a3a3a;transform:scaleX(0.87);transform-origin:50% 0;">Salary</div>
<div class="t" style="left:566.70px;top:431px;font-size:8.1px;color:#444;transform:scaleX(0.92);transform-origin:0 0;">60100</div>
<div class="t" style="left:549.60px;width:200px;text-align:center;top:431px;font-size:8.1px;color:#3a3a3a;transform:scaleX(0.87);transform-origin:50% 0;">Bonus &amp; Overtime</div>
<div class="t" style="left:566.70px;top:442px;font-size:8.1px;color:#444;transform:scaleX(0.92);transform-origin:0 0;">62110</div>
<div class="t" style="left:549.60px;width:200px;text-align:center;top:442px;font-size:8.1px;color:#3a3a3a;transform:scaleX(0.87);transform-origin:50% 0;">Bonus</div>
<div class="t" style="left:566.70px;top:452px;font-size:8.1px;color:#444;transform:scaleX(0.92);transform-origin:0 0;">62120</div>
<div class="t" style="left:549.60px;width:200px;text-align:center;top:452px;font-size:8.1px;color:#3a3a3a;transform:scaleX(0.87);transform-origin:50% 0;">FICA</div>
<div class="t" style="left:566.70px;top:463px;font-size:8.1px;color:#444;transform:scaleX(0.92);transform-origin:0 0;">62130</div>
<div class="t" style="left:549.60px;width:200px;text-align:center;top:463px;font-size:8.1px;color:#3a3a3a;transform:scaleX(0.87);transform-origin:50% 0;">FUTA</div>
<div class="t" style="left:566.70px;top:474px;font-size:8.1px;color:#444;transform:scaleX(0.92);transform-origin:0 0;">62160</div>
<div class="t" style="left:549.60px;width:200px;text-align:center;top:474px;font-size:8.1px;color:#3a3a3a;transform:scaleX(0.87);transform-origin:50% 0;">Employee Health Benefits</div>
</div>
<div class="ab" style="left:923px;top:113px;width:13px;height:372px;background:#e8e8e8;border-left:1px solid #b9b9b9"></div>
<div class="ab" style="left:924.5px;top:113.3px;width:10.5px;height:9px;background:#fff;border:1px solid #c8c8c8;border-radius:1px"></div>
<svg class="ab" style="left:927px;top:116px" width="6" height="4" viewBox="0 0 6 4" ><polygon points="0.5,3.5 3,0.5 5.5,3.5" fill="#444"/></svg>
<div class="ab" style="left:924.5px;top:122px;width:10.5px;height:33px;background:#fff;border:1px solid #c8c8c8;border-radius:1px"></div>
<div class="ab" style="left:924.5px;top:476.5px;width:10.5px;height:8.5px;background:#fff;border:1px solid #c8c8c8;border-radius:1px"></div>
<svg class="ab" style="left:927px;top:479px" width="6" height="4" viewBox="0 0 6 4" ><polygon points="0.5,0.5 3,3.5 5.5,0.5" fill="#444"/></svg>
<div class="ab" style="left:73px;top:485px;width:863px;height:16.5px;background:#e6e6e6;border-top:1px solid #d4d4d4"></div>
<div class="t" style="left:88.5px;top:488px;font-size:9px;color:#c0c0c0">&#8249;</div>
<div class="t" style="left:105.5px;top:488px;font-size:9px;color:#b0b0b0">&#8250;</div>
<div class="ab" style="left:132.5px;top:485.5px;width:41px;height:14.5px;background:#fff;border-bottom:1.5px solid #217346"></div>
<div class="t" style="left:140.00px;top:489px;font-size:8px;color:#217346;font-weight:bold;transform:scaleX(0.97);transform-origin:0 0;">Payroll</div>
<div class="t" style="left:180.80px;top:489px;font-size:8px;color:#555;transform:scaleX(0.95);transform-origin:0 0;">Directions</div>
<div class="ab" style="left:225px;top:487px;width:1px;height:12px;background:#c4c4c4"></div>
<div class="ab" style="left:607px;top:489.5px;width:308px;height:9px;background:#dedede"></div>
<div class="ab" style="left:574.2px;top:491px;width:1px;height:1.2px;background:#aaa"></div>
<div class="ab" style="left:574.2px;top:493.5px;width:1px;height:1.2px;background:#aaa"></div>
<div class="ab" style="left:574.2px;top:496px;width:1px;height:1.2px;background:#aaa"></div>
<div class="ab" style="left:583.5px;top:489.8px;width:8.5px;height:8.5px;background:#fff;border:1px solid #c8c8c8;border-radius:1px"></div>
<svg class="ab" style="left:586px;top:492px" width="4" height="5" viewBox="0 0 4 5" ><polygon points="3.5,0.3 0.5,2.5 3.5,4.7" fill="#444"/></svg>
<div class="ab" style="left:591.6px;top:489.8px;width:16px;height:8.5px;background:#fff;border:1px solid #c8c8c8;border-radius:1px"></div>
<div class="ab" style="left:914.5px;top:489.5px;width:8.5px;height:9px;background:#fff;border:1px solid #c8c8c8;border-radius:1px"></div>
<svg class="ab" style="left:917px;top:492px" width="4" height="5" viewBox="0 0 4 5" ><polygon points="0.5,0.3 3.5,2.5 0.5,4.7" fill="#444"/></svg>
<div class="ab" style="left:73px;top:502px;width:863px;height:16px;background:#2f3744"></div>
<div class="t" style="left:431.60px;top:506px;font-size:10px;color:#5f6774;transform:scaleX(0.925);transform-origin:0 0;">Spreading and Line item details</div>
<svg class="ab" style="left:567px;top:507px" width="8" height="6" viewBox="0 0 8 6" ><polyline points="1,4.5 4,1.5 7,4.5" fill="none" stroke="#c8cbd0" stroke-width="1.6"/></svg>
</div></div>
<div class="ab" style="left:0;top:0;width:950px;height:533px;border:2px solid #b3b4b8;border-bottom-width:3px;border-radius:14px"></div>
</body></html>
